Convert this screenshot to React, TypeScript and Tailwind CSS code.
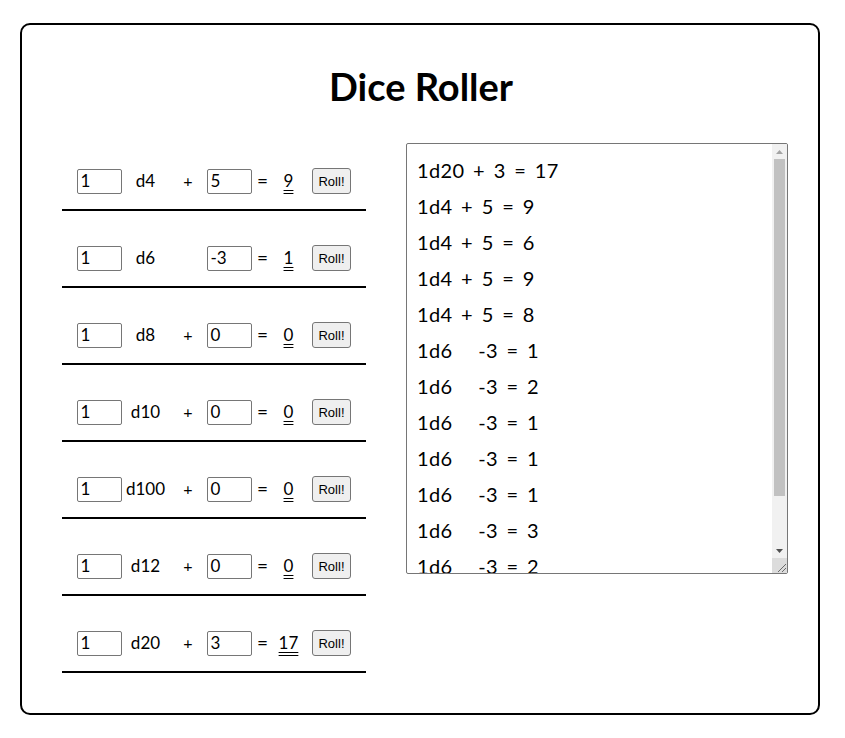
import React, { useState } from 'react';

type Die = { sides: number; count: string; mod: string; result: number };

const initialDice: Die[] = [
    { sides: 4, count: '1', mod: '5', result: 9 },
    { sides: 6, count: '1', mod: '-3', result: 1 },
    { sides: 8, count: '1', mod: '0', result: 0 },
    { sides: 10, count: '1', mod: '0', result: 0 },
    { sides: 100, count: '1', mod: '0', result: 0 },
    { sides: 12, count: '1', mod: '0', result: 0 },
    { sides: 20, count: '1', mod: '3', result: 17 },
];

const initialHistory = [
    '1d20 + 3 = 17',
    '1d4 + 5 = 9',
    '1d4 + 5 = 6',
    '1d4 + 5 = 9',
    '1d4 + 5 = 8',
    '1d6   -3 = 1',
    '1d6   -3 = 2',
    '1d6   -3 = 1',
    '1d6   -3 = 1',
    '1d6   -3 = 1',
    '1d6   -3 = 3',
    '1d6   -3 = 2',
    '1d6   -3 = 1',
    '1d6   -3 = 4',
];

const font = { fontFamily: '"Lato", "Open Sans", sans-serif' };

export default function App() {
    const [dice, setDice] = useState<Die[]>(initialDice);
    const [history, setHistory] = useState<string[]>(initialHistory);

    const update = (i: number, patch: Partial<Die>) => {
        setDice((prev) => prev.map((d, j) => (j === i ? { ...d, ...patch } : d)));
    };

    const roll = (i: number) => {
        const d = dice[i];
        const n = parseInt(d.count) || 0;
        const m = parseInt(d.mod) || 0;
        let total = m;
        for (let k = 0; k < n; k++) total += Math.floor(Math.random() * d.sides) + 1;
        update(i, { result: total });
        const sign = m < 0 ? '  ' : '+ ';
        setHistory((h) => [`${n}d${d.sides} ${sign}${m} = ${total}`, ...h]);
    };

    return (
        <div className="min-h-screen bg-white pt-[23px] pl-[20px]" style={font}>
            <div className="w-[800px] h-[692px] border-2 border-black rounded-[10px] text-black">
                <h1 className="text-center text-[38px] font-bold leading-[44px] mt-[39px] ml-[2px]">Dice Roller</h1>

                <div className="flex items-start mt-[35px]">
                    <div className="w-[304px] ml-[40px] mt-[-9px]">
                        {dice.map((d, i) => {
                            const m = parseInt(d.mod) || 0;
                            return (
                                <div key={d.sides} className="flex items-center justify-center h-[77px] pt-[34px] pb-[15px] border-b-2 border-black text-[17px] leading-[26px]">
                                    <input
                                        value={d.count}
                                        onChange={(e) => update(i, { count: e.target.value })}
                                        className="w-[45px] h-[25px] border border-[#767676] rounded-[2px] px-[2px] text-[17px] outline-none"
                                        style={font}
                                    />
                                    <span className="w-[46px] text-center">d{d.sides}</span>
                                    <span className="w-[39px] text-center text-[16px]">{m < 0 ? '' : '+'}</span>
                                    <input
                                        value={d.mod}
                                        onChange={(e) => update(i, { mod: e.target.value })}
                                        className="w-[45px] h-[25px] border border-[#767676] rounded-[2px] px-[2px] text-[17px] outline-none"
                                        style={font}
                                    />
                                    <span className="w-[20px] text-center text-[19px]">=</span>
                                    <span className="w-[32px] text-center underline decoration-double underline-offset-[3px]">{d.result}</span>
                                    <button
                                        onClick={() => roll(i)}
                                        className="ml-[8px] h-[26px] px-[5px] bg-[#efefef] border border-[#767676] rounded-[3px] text-[13px] leading-none"
                                        style={{ fontFamily: '"Liberation Sans", Arial, sans-serif' }}
                                    >
                                        Roll!
                                    </button>
                                </div>
                            );
                        })}
                    </div>

                    <div className="ml-[40px] w-[382px] h-[431px] border border-[#767676] rounded-[2px] flex overflow-hidden">
                        <textarea
                            readOnly
                            value={history.join('\n')}
                            className="flex-1 h-full px-[10px] py-[8px] text-[20px] leading-[36px] tracking-[0.4px] [word-spacing:3px] outline-none whitespace-pre overflow-hidden resize-none"
                            style={font}
                        />
                        {/* scrollbar */}
                        <div className="w-[15px] h-full flex flex-col bg-[#f1f1f1]">
                            <div className="h-[15px] flex items-center justify-center">
                                <svg width="7" height="4" viewBox="0 0 7 4"><path d="M3.5 0 L7 4 L0 4 Z" fill="#a3a3a3" /></svg>
                            </div>
                            <div className="flex-1 px-[2px]">
                                <div className="h-[337px] bg-[#c1c1c1]" />
                            </div>
                            <div className="h-[15px] flex items-center justify-center">
                                <svg width="7" height="4" viewBox="0 0 7 4"><path d="M0 0 L7 0 L3.5 4 Z" fill="#505050" /></svg>
                            </div>
                            <div className="h-[15px] bg-[#dcdcdc] flex items-end justify-end">
                                <svg width="12" height="12" viewBox="0 0 12 12">
                                    <path d="M11 3 L3 11 M11 7 L7 11" stroke="#6b6b6b" strokeWidth="1" />
                                </svg>
                            </div>
                        </div>
                    </div>
                </div>
            </div>
        </div>
    );
}
